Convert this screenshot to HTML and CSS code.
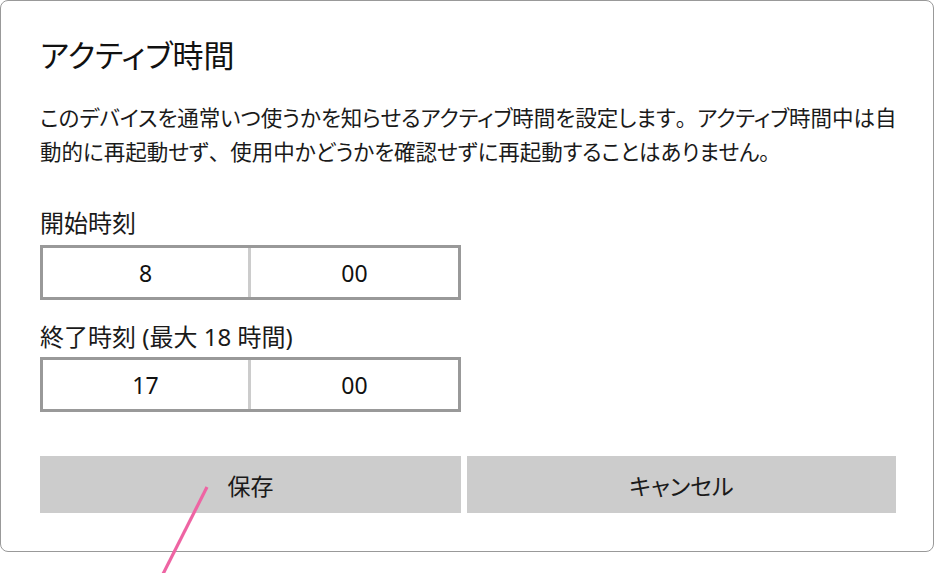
FILE: index.html
```html
<!DOCTYPE html>
<html lang="ja">
<head>
    <meta charset="UTF-8">
    <meta name="viewport" content="width=device-width, initial-scale=1.0">
    <title>アクティブ時間</title>
    <link rel="stylesheet" href="styles.css">
</head>
<body>
    <div class="dialog">
        <h1 class="dialog-title">アクティブ時間</h1>
        <p class="dialog-text">このデバイスを通常いつ使うかを知らせるアクティブ時間を設定します<span class="punct">。</span>アクティブ時間中は自<br>動的に再起動せず<span class="punct">、</span>使用中かどうかを確認せずに再起動することはありません<span class="punct">。</span></p>

        <div class="field field-start">
            <div class="field-label">開始時刻</div>
            <div class="time-box">
                <div class="time-part">8</div>
                <div class="time-part">00</div>
            </div>
        </div>

        <div class="field field-end">
            <div class="field-label">終了時刻 (最大 18 時間)</div>
            <div class="time-box">
                <div class="time-part">17</div>
                <div class="time-part">00</div>
            </div>
        </div>

        <div class="actions">
            <button class="btn">保存</button>
            <button class="btn">キャンセル</button>
        </div>
    </div>

    <!-- callout line pointing at the save button -->
    <svg class="pointer" width="935" height="573" viewBox="0 0 935 573">
        <line x1="207" y1="487" x2="162" y2="576" stroke="#ee64a3" stroke-width="3.2"/>
    </svg>
</body>
</html>
```

FILE: styles.css
```css
body {
    margin: 0;
    padding: 0;
    background-color: #fff;
    font-family: "Noto Sans", "Noto Sans CJK JP", sans-serif;
    font-feature-settings: "palt";
    color: #1a1a1a;
}
.dialog {
    box-sizing: border-box;
    width: 934px;
    height: 552px;
    border: 1px solid #999;
    border-radius: 8px;
    padding: 34px 37px 0 39px;
    background: #fff;
}
.dialog-title {
    margin: 0;
    font-size: 31px;
    font-weight: normal;
    line-height: 40px;
    color: #111;
}
.dialog-text {
    margin: 26px 0 0;
    font-size: 21.5px;
    line-height: 34px;
    white-space: nowrap;
}
.punct {
    font-feature-settings: normal;
}
.field-label {
    font-size: 24px;
    line-height: 34px;
}
.field-start {
    margin-top: 37px;
}
.field-end {
    margin-top: 20px;
}
.time-box {
    box-sizing: border-box;
    width: 421px;
    height: 55px;
    margin-top: 5px;
    border: 3px solid #999;
    display: grid;
    grid-template-columns: 205px 1fr;
}
.field-end .time-box {
    margin-top: 3px;
}
.time-part {
    display: flex;
    align-items: center;
    justify-content: center;
    font-size: 23px;
    color: #111;
}
.time-part + .time-part {
    border-left: 3px solid #ccc;
}
.actions {
    margin-top: 44px;
    display: grid;
    grid-template-columns: 421px 1fr;
    gap: 6px;
}
.btn {
    height: 57px;
    border: none;
    background-color: #ccc;
    font-family: inherit;
    font-feature-settings: "palt";
    font-size: 23px;
    color: #1a1a1a;
    padding: 0;
}
.pointer {
    position: absolute;
    left: 0;
    top: 0;
    pointer-events: none;
}
```
